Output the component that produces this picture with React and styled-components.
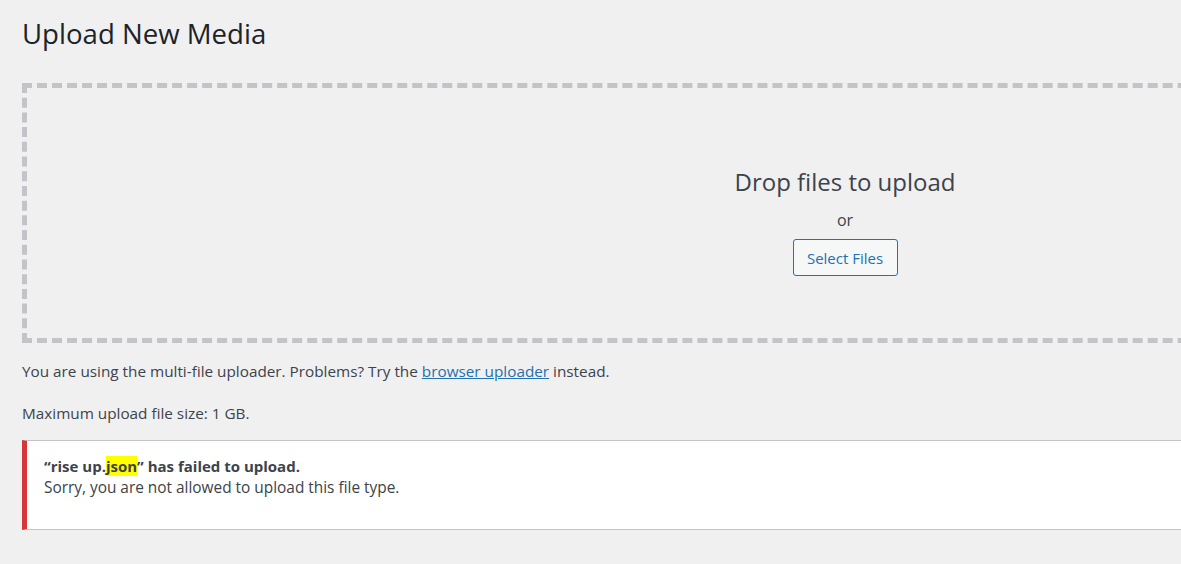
import React from "react"
import styled, { createGlobalStyle } from "styled-components"

const GlobalStyle = createGlobalStyle`
  html, body {
    margin: 0;
    padding: 0;
    background: #f0f0f1;
    overflow: hidden;
  }
  body {
    font-family: "Open Sans", "Noto Sans", sans-serif;
    color: #3c434a;
  }
`

const Wrap = styled.div`
  width: 1646px;
  padding-left: 22px;
`

const Title = styled.h1`
  margin: 0;
  padding-top: 15px;
  font-size: 27.6px;
  line-height: 36px;
  font-weight: 400;
  color: #1d2327;
`

const DropArea = styled.div`
  box-sizing: border-box;
  margin-top: 32px;
  height: 260px;
  border: 5px dashed #c3c4c7;
  display: flex;
  flex-direction: column;
  align-items: center;
  padding-top: 78px;
`

const DropText = styled.p`
  margin: 0;
  font-size: 24px;
  line-height: 32px;
  color: #3c434a;
`

const Or = styled.p`
  margin: 11px 0 0;
  font-size: 16px;
  line-height: 22px;
`

const Button = styled.button`
  box-sizing: border-box;
  margin-top: 8px;
  height: 37px;
  width: 105px;
  padding: 0;
  border: 1px solid #2271b1;
  border-radius: 3px;
  background: #f6f7f7;
  color: #2271b1;
  font-family: inherit;
  font-size: 15px;
  cursor: pointer;
`

const Info = styled.p`
  margin: ${({ gap }) => gap}px 0 0;
  font-size: 15.3px;
  line-height: 22px;

  a {
    color: #2271b1;
    text-decoration: underline;
  }
`

const Notice = styled.div`
  box-sizing: border-box;
  margin-top: 16px;
  height: 90px;
  background: #fff;
  border: 1px solid #c3c4c7;
  border-left: 5px solid #d63638;
  box-shadow: 0 1px 1px rgba(0, 0, 0, 0.04);
  padding: 14px 0 0 17px;
  font-size: 15.4px;
  line-height: 22px;
`

const NoticeTitle = styled.strong`
  display: block;
  font-size: 15px;
  font-weight: 700;
`

const Mark = styled.span`
  background: #ffff00;
`

export default function App() {
  return (
    <>
      <GlobalStyle />
      <Wrap>
        <Title>Upload New Media</Title>
        <DropArea>
          <DropText>Drop files to upload</DropText>
          <Or>or</Or>
          <Button>Select Files</Button>
        </DropArea>
        <Info gap={17}>
          You are using the multi-file uploader. Problems? Try the{" "}
          <a href="#">browser uploader</a> instead.
        </Info>
        <Info gap={20}>Maximum upload file size: 1 GB.</Info>
        <Notice>
          <NoticeTitle>
            “rise up.<Mark>json</Mark>” has failed to upload.
          </NoticeTitle>
          Sorry, you are not allowed to upload this file type.
        </Notice>
      </Wrap>
    </>
  )
}
